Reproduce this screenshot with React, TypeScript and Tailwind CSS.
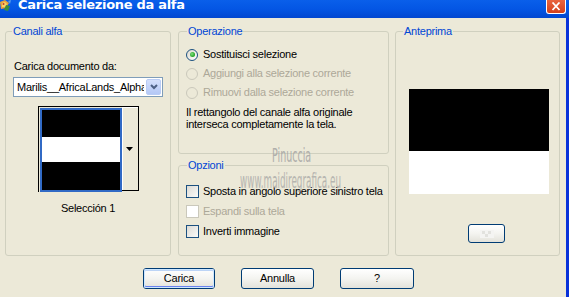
import React from "react";

function Radio({ checked, disabled }: { checked?: boolean; disabled?: boolean }) {
  return (
    <span
      className={
        "relative flex h-[12px] w-[12px] shrink-0 items-center justify-center rounded-full border " +
        (disabled
          ? "border-[#CAC8BB] bg-[#ECE9D8]"
          : "border-[#1C5180] bg-gradient-to-br from-[#DCD9CE] to-[#FFFFFF]")
      }
    >
      {checked && (
        <span className="h-[5px] w-[5px] rounded-full bg-[radial-gradient(circle_at_40%_40%,#7FE07F,#21A121_70%)]" />
      )}
    </span>
  );
}

function Check({ disabled }: { disabled?: boolean }) {
  return (
    <span
      className={
        "block h-[13px] w-[13px] shrink-0 border " +
        (disabled
          ? "border-[#CAC8BB] bg-white"
          : "border-[#1C5180] bg-gradient-to-br from-[#DCDBD5] to-[#FBFBF9]")
      }
    />
  );
}

function XpButton({ children, def, className }: { children?: React.ReactNode; def?: boolean; className?: string }) {
  return (
    <div
      className={
        "flex items-center justify-center rounded-[3px] border border-[#003C74] bg-gradient-to-b from-[#FFFFFF] via-[#F4F4F0] to-[#E3E2DA] text-black " +
        (className ?? "")
      }
    >
      <div
        className={
          "flex h-full w-full items-center justify-center rounded-[2px] " +
          (def ? "shadow-[inset_0_0_0_1px_#CEE7FF,inset_0_-1px_0_1px_#6982EE,inset_0_1px_0_1px_#BCD4F6]" : "")
        }
      >
        {children}
      </div>
    </div>
  );
}

export default function App() {
  return (
    <div className="relative h-[297px] w-[569px] overflow-hidden bg-[#ECE9D8] font-['Liberation_Sans',Arial,sans-serif] text-[11px] leading-[13px] tracking-[-0.25px] text-black">
      {/* title bar */}
      <div className="flex h-[18px] items-start bg-gradient-to-b from-[#0A5FEA] via-[#0456E4] to-[#0247D0]">
        <svg width="12" height="12" viewBox="0 0 12 12" className="ml-[0px] mt-[0px]">
          <path d="M0 2 L5 0 L9 3 L6 8 L1 9 Z" fill="#E8A33C" />
          <path d="M2 3 L5 2 L7 4 L5 7 L2 7 Z" fill="#F6D36A" />
          <path d="M6 5 L10 6 L8 11 L4 10 Z" fill="#3A8F3E" />
          <circle cx="3.5" cy="4" r="1" fill="#C0392B" />
          <path d="M8 1 L11 0 L10 4 Z" fill="#5BA0E8" />
        </svg>
        <span className="ml-[6px] mt-[-2px] whitespace-nowrap font-['DejaVu_Sans',sans-serif] text-[13px] font-bold leading-[13px] tracking-[-0.3px] text-white">
          Carica selezione da alfa
        </span>
        <div className="flex-1" />
        <div className="mr-[3px] flex h-[14px] w-[20px] items-center justify-center rounded-b-[3px] border-x border-b border-white bg-gradient-to-b from-[#E8643F] to-[#D4401A]">
          <svg width="10" height="9" viewBox="0 0 10 9">
            <path d="M1.5 0.5 L8.5 8 M8.5 0.5 L1.5 8" stroke="white" strokeWidth="1.8" />
          </svg>
        </div>
      </div>

      <div className="flex h-[279px]">
        <div className="flex flex-1 flex-col pl-[5px] pt-[7px]">
          <div className="flex">
            {/* Canali alfa */}
            <fieldset className="flex h-[231px] w-[166px] flex-col rounded-[3px] border border-[#D0D0BF]">
              <legend className="ml-[6px] px-[1px] leading-[13px] text-[#0046D5]">Canali alfa</legend>
              <div className="mt-[22px] pl-[8px]">Carica documento da:</div>
              <div className="ml-[7px] mt-[4px] flex h-[20px] w-[150px] items-center border border-[#7F9DB9] bg-white">
                <span className="ml-[3px] w-[127px] overflow-hidden whitespace-nowrap">Marilis__AfricaLands_Alpha</span>
                <div className="ml-auto mr-[1px] flex h-[16px] w-[15px] items-center justify-center rounded-[2px] border border-[#B9CCF5] bg-gradient-to-b from-[#D4E0FC] to-[#B4C8F6]">
                  <svg width="8" height="6" viewBox="0 0 8 6">
                    <path d="M1 1 L4 4 L7 1" stroke="#4D6185" strokeWidth="2" fill="none" />
                  </svg>
                </div>
              </div>
              <div className="mt-[9px] flex h-[86px] w-[101px] self-center border-l border-t border-black">
                <div className="ml-[1px] mt-[1px] flex h-[84px] w-[82px] flex-col border-[2px] border-[#316AC5] bg-black">
                  <div className="mt-[1px] h-[26px] bg-black" />
                  <div className="h-[25px] bg-white" />
                  <div className="flex-1 bg-black" />
                </div>
                <div className="flex h-[84px] w-[17px] items-center justify-center border-b border-r border-black bg-[#ECE9D8] shadow-[inset_1px_1px_0_#FFFFFF]">
                  <svg width="7" height="4" viewBox="0 0 7 4">
                    <path d="M0 0 L7 0 L3.5 4 Z" fill="#000" />
                  </svg>
                </div>
              </div>
              <div className="mt-[10px] text-center">Selección 1</div>
            </fieldset>

            {/* middle column */}
            <div className="ml-[7px] flex w-[211px] flex-col">
              <fieldset className="h-[129px] rounded-[3px] border border-[#D0D0BF]">
                <legend className="ml-[8px] px-[1px] leading-[13px] text-[#0046D5]">Operazione</legend>
                <div className="mt-[7px] pl-[7px]">
                  <div className="flex h-[19px] items-center gap-[5px] whitespace-nowrap">
                    <Radio checked />
                    <span>Sostituisci selezione</span>
                  </div>
                  <div className="flex h-[19px] items-center gap-[5px] whitespace-nowrap text-[#ACA899]">
                    <Radio disabled />
                    <span>Aggiungi alla selezione corrente</span>
                  </div>
                  <div className="flex h-[19px] items-center gap-[5px] whitespace-nowrap text-[#ACA899]">
                    <Radio disabled />
                    <span>Rimuovi dalla selezione corrente</span>
                  </div>
                  <div className="mt-[4px] whitespace-nowrap leading-[12px]">
                    Il rettangolo del canale alfa originale
                    <br />
                    interseca completamente la tela.
                  </div>
                </div>
              </fieldset>
              <fieldset className="mt-[5px] h-[97px] rounded-[3px] border border-[#D0D0BF]">
                <legend className="ml-[8px] px-[1px] leading-[13px] text-[#0046D5]">Opzioni</legend>
                <div className="mt-[9px] pl-[7px]">
                  <div className="flex h-[20px] items-center gap-[4px] whitespace-nowrap">
                    <Check />
                    <span>Sposta in angolo superiore sinistro tela</span>
                  </div>
                  <div className="flex h-[20px] items-center gap-[4px] whitespace-nowrap text-[#ACA899]">
                    <Check disabled />
                    <span>Espandi sulla tela</span>
                  </div>
                  <div className="flex h-[20px] items-center gap-[4px] whitespace-nowrap">
                    <Check />
                    <span>Inverti immagine</span>
                  </div>
                </div>
              </fieldset>
            </div>

            {/* Anteprima */}
            <fieldset className="ml-[6px] flex h-[231px] w-[165px] flex-col rounded-[3px] border border-[#D0D0BF]">
              <legend className="ml-[7px] px-[1px] leading-[13px] text-[#0046D5]">Anteprima</legend>
              <div className="ml-[13px] mt-[51px] flex h-[105px] w-[140px] flex-col">
                <div className="h-[62px] bg-black" />
                <div className="flex-1 bg-white" />
              </div>
              <XpButton className="ml-[72px] mt-[30px] h-[19px] w-[37px]">
                <svg width="14" height="8" viewBox="0 0 14 8">
                  <rect x="0" y="0" width="14" height="8" fill="#F4F4F2" />
                  <rect x="2" y="1" width="3" height="3" fill="#E2E2DE" />
                  <rect x="8" y="1" width="3" height="3" fill="#E2E2DE" />
                  <rect x="5" y="4" width="3" height="3" fill="#E2E2DE" />
                </svg>
              </XpButton>
            </fieldset>
          </div>

          {/* buttons */}
          <div className="mt-[12px] flex gap-[26px] pl-[138px]">
            <XpButton def className="h-[21px] w-[72px]">Carica</XpButton>
            <XpButton className="h-[21px] w-[73px]">Annulla</XpButton>
            <XpButton className="h-[21px] w-[74px]">?</XpButton>
          </div>
        </div>
        <div className="w-[3px] bg-[#0831D9]" />
      </div>

      {/* watermark */}
      <div className="pointer-events-none absolute left-[272px] top-[146px] origin-left scale-x-[0.5] whitespace-nowrap font-['DejaVu_Sans',sans-serif] text-[19px] leading-[19px] tracking-normal text-[#A0A0A0] opacity-80">
        Pinuccia
      </div>
      <div className="pointer-events-none absolute left-[240px] top-[170px] origin-left scale-x-[0.4] whitespace-nowrap font-['DejaVu_Sans',sans-serif] text-[22px] leading-[22px] tracking-normal text-[#A0A0A0] opacity-70">
        www.maidiregrafica.eu
      </div>
    </div>
  );
}
